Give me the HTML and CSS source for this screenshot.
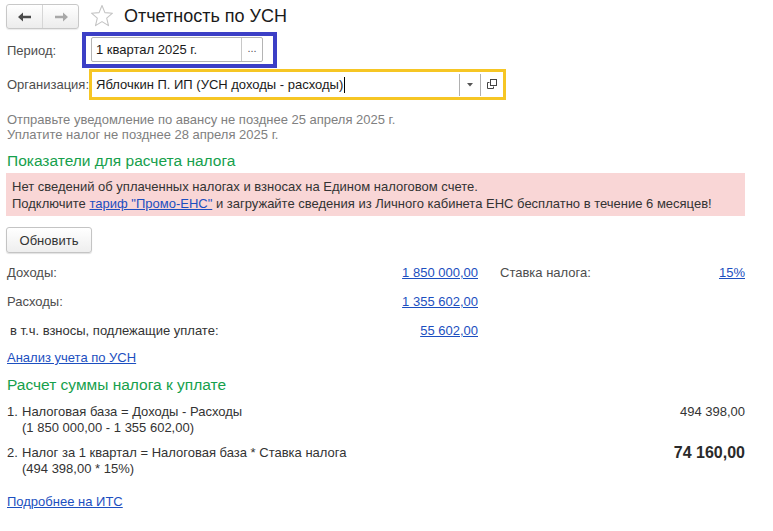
FILE: index.html
```html
<!DOCTYPE html>
<html lang="ru">
<head>
<meta charset="utf-8">
<title>Отчетность по УСН</title>
<link rel="stylesheet" href="styles.css">
</head>
<body>
<div class="page">
  <header class="header">
    <div class="nav">
      <button class="nav-btn nav-back" aria-label="Назад">
        <svg width="14" height="10" viewBox="0 0 14 10"><path d="M0 5 L5 0.5 V3.8 H13 V6.2 H5 V9.5 Z" fill="#4a4a4a"/></svg>
      </button>
      <button class="nav-btn nav-fwd" aria-label="Вперед">
        <svg width="14" height="10" viewBox="0 0 14 10"><path d="M14 5 L9 0.5 V3.8 H1 V6.2 H9 V9.5 Z" fill="#a8a8a8"/></svg>
      </button>
    </div>
    <svg class="star" width="24" height="24" viewBox="0 0 24 24"><path d="M12 1.5 L14.9 8.6 L22.5 9.2 L16.7 14.1 L18.5 21.6 L12 17.6 L5.5 21.6 L7.3 14.1 L1.5 9.2 L9.1 8.6 Z" fill="none" stroke="#c4c4c4" stroke-width="1.1" stroke-linejoin="round"/></svg>
    <h1 class="title">Отчетность по УСН</h1>
  </header>

  <div class="form-row period-row">
    <label class="label label-period">Период:</label>
    <div class="hl-blue">
      <div class="field period-field">
        <span class="field-text">1 квартал 2025 г.</span>
        <span class="field-btn">...</span>
      </div>
    </div>
  </div>

  <div class="form-row org-row">
    <label class="label label-org">Организация:</label>
    <div class="hl-yellow">
      <span class="org-text">Яблочкин П. ИП (УСН доходы - расходы)<span class="caret"></span></span>
      <span class="sep"></span>
      <span class="drop"><svg width="6" height="4" viewBox="0 0 6 4"><path d="M0 0 H6 L3 3.5 Z" fill="#555"/></svg></span>
      <span class="sep"></span>
      <span class="open"><svg width="10" height="10" viewBox="0 0 10 10"><rect x="3.5" y="0.5" width="6" height="6" fill="none" stroke="#444" stroke-width="1"/><path d="M2.5 3.5 H0.5 V9.5 H6.5 V7.5" fill="none" stroke="#444" stroke-width="1"/></svg></span>
    </div>
  </div>

  <div class="info">
    <div>Отправьте уведомление по авансу не позднее 25 апреля 2025 г.</div>
    <div>Уплатите налог не позднее 28 апреля 2025 г.</div>
  </div>

  <h2 class="section-title first">Показатели для расчета налога</h2>

  <div class="alert">
    <div>Нет сведений об уплаченных налогах и взносах на Едином налоговом счете.</div>
    <div>Подключите <a href="#" class="link">тариф "Промо-ЕНС"</a> и загружайте сведения из Личного кабинета ЕНС бесплатно в течение 6 месяцев!</div>
  </div>

  <button class="btn">Обновить</button>

  <div class="figures">
    <div class="fig-label">Доходы:</div>
    <div class="fig-value"><a href="#" class="link">1 850 000,00</a></div>
    <div class="fig-side"><span>Ставка налога:</span><a href="#" class="link">15%</a></div>

    <div class="fig-label">Расходы:</div>
    <div class="fig-value"><a href="#" class="link">1 355 602,00</a></div>
    <div class="fig-side"></div>

    <div class="fig-label fig-sub">в т.ч. взносы, подлежащие уплате:</div>
    <div class="fig-value"><a href="#" class="link">55 602,00</a></div>
    <div class="fig-side"></div>
  </div>

  <div class="analysis"><a href="#" class="link">Анализ учета по УСН</a></div>

  <h2 class="section-title second">Расчет суммы налога к уплате</h2>

  <div class="calc">
    <div class="calc-item">
      <span class="num">1.</span>
      <div class="calc-text">
        <div>Налоговая база = Доходы - Расходы</div>
        <div>(1 850 000,00 - 1 355 602,00)</div>
      </div>
      <div class="calc-sum">494 398,00</div>
    </div>
    <div class="calc-item item2">
      <span class="num">2.</span>
      <div class="calc-text">
        <div>Налог за 1 квартал = Налоговая база * Ставка налога</div>
        <div>(494 398,00 * 15%)</div>
      </div>
      <div class="calc-sum total">74 160,00</div>
    </div>
  </div>

  <div class="more"><a href="#" class="link">Подробнее на ИТС</a></div>
</div>
</body>
</html>
```

FILE: styles.css
```css
* { box-sizing: border-box; }

html, body {
  margin: 0;
  padding: 0;
  background: #fff;
}

body {
  font-family: "Liberation Sans", Arial, sans-serif;
  font-size: 13px;
  color: #4d4d4d;
}

.page {
  width: 773px;
  height: 531px;
  padding: 4px 28px 0 6px;
  overflow: hidden;
}

.header {
  display: flex;
  align-items: center;
  height: 25px;
}

.nav {
  display: flex;
  width: 73px;
  height: 25px;
  border: 1px solid #c8c8c8;
  border-radius: 3px;
  background: linear-gradient(#ffffff, #ececec);
  box-shadow: 0 1px 1px rgba(0,0,0,0.08);
  overflow: hidden;
}

.nav-btn {
  flex: 1;
  margin: 0;
  padding: 0;
  border: none;
  background: transparent;
  display: flex;
  align-items: center;
  justify-content: center;
}

.nav-back {
  border-right: 1px solid #d6d6d6;
}

.star {
  margin-left: 11px;
  margin-top: -1px;
}

.title {
  margin: 0 0 0 10px;
  font-size: 18px;
  font-weight: normal;
  color: #1a1a1a;
  line-height: 25px;
}

.form-row {
  display: flex;
  align-items: center;
}

.period-row {
  margin-top: 3px;
  height: 36px;
}

.label {
  padding-left: 1px;
  color: #4d4d4d;
}

.label-period {
  width: 76px;
}

.hl-blue {
  border: 4.5px solid #3c3fc6;
  padding: 1px 10px 2px 5px;
  width: 195px;
  height: 36px;
}

.field {
  display: flex;
  height: 25px;
  border: 1px solid #b4b4b4;
  border-radius: 2px;
  background: #fff;
}

.field-text {
  flex: 1;
  padding-left: 4px;
  line-height: 23px;
  color: #1a1a1a;
}

.field-btn {
  width: 21px;
  border-left: 1px solid #c8c8c8;
  text-align: center;
  line-height: 21px;
  font-size: 11px;
  color: #555;
}

.org-row {
  margin-top: 1px;
  height: 31px;
}

.label-org {
  width: 83px;
}

.hl-yellow {
  display: flex;
  align-items: center;
  width: 417px;
  height: 31px;
  border: 3px solid #f6c624;
  padding-left: 4px;
}

.org-text {
  flex: 1;
  color: #1a1a1a;
  display: flex;
  align-items: center;
}

.caret {
  display: inline-block;
  width: 1px;
  height: 16px;
  background: #000;
  margin-left: 1px;
}

.sep {
  width: 1px;
  height: 22px;
  background: #b0b0b0;
}

.drop {
  width: 20px;
  display: flex;
  justify-content: center;
  align-items: center;
}

.open {
  width: 22px;
  display: flex;
  justify-content: center;
  align-items: center;
  padding-bottom: 2px;
}

.info {
  margin-top: 12px;
  padding-left: 1px;
  line-height: 15px;
  color: #808080;
}

.section-title {
  margin: 0;
  padding-left: 1px;
  font-size: 15.5px;
  font-weight: normal;
  color: #16a04c;
  line-height: 20px;
}

.section-title.first {
  margin-top: 9px;
}

.alert {
  margin-top: 2px;
  background: #f9d6d6;
  padding: 5px 7px 4px 6px;
  line-height: 17px;
  color: #333;
}

.link {
  color: #1c4fc0;
  text-decoration: underline;
}

.btn {
  display: block;
  margin-top: 11px;
  width: 86px;
  height: 26px;
  padding: 0;
  border: 1px solid #c4c4c4;
  border-radius: 3px;
  background: linear-gradient(#ffffff, #eeeeee);
  box-shadow: 0 1px 1px rgba(0,0,0,0.12);
  font-family: inherit;
  font-size: 13px;
  color: #333;
}

.figures {
  display: grid;
  grid-template-columns: 1fr auto 245px;
  column-gap: 22px;
  margin-top: 5px;
}

.figures > div {
  line-height: 29px;
}

.fig-label {
  padding-left: 1px;
}

.fig-sub {
  padding-left: 4px;
  color: #333;
}

.fig-value {
  text-align: right;
}

.fig-side {
  display: flex;
  justify-content: space-between;
}

.analysis {
  margin-top: 3px;
  padding-left: 1px;
  line-height: 20px;
}

.section-title.second {
  margin-top: 7px;
}

.calc {
  margin-top: 9px;
}

.calc-item {
  display: flex;
  align-items: flex-start;
  line-height: 16px;
  color: #333;
}

.calc-item.item2 {
  margin-top: 9px;
}

.num {
  width: 16px;
  padding-left: 1px;
}

.calc-text {
  flex: 1;
}

.calc-sum {
  text-align: right;
}

.calc-sum.total {
  font-size: 16px;
  font-weight: bold;
  color: #2a2a2a;
}

.more {
  margin-top: 17px;
  padding-left: 1px;
  line-height: 16px;
}
```
